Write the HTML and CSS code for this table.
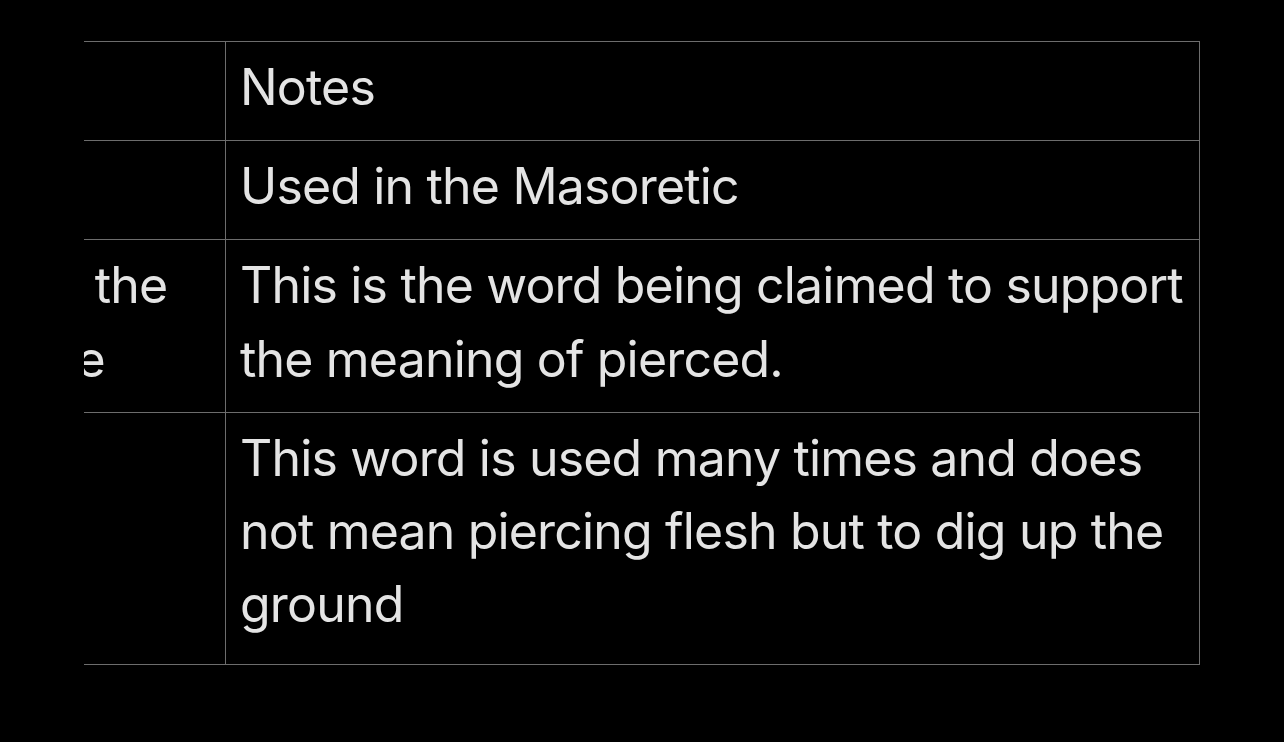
FILE: index.html
```html
<!DOCTYPE html>
<html lang="en">
<head>
<meta charset="utf-8">
<title>Notes table</title>
<link rel="stylesheet" href="styles.css">
</head>
<body>
<div class="scroller">
  <table class="notes">
    <colgroup>
      <col class="col-word">
      <col class="col-notes">
    </colgroup>
    <tr>
      <td>Word</td>
      <td>Notes</td>
    </tr>
    <tr>
      <td>Kaari</td>
      <td>Used in the Masoretic</td>
    </tr>
    <tr>
      <td>Kaaru, a reading in the<br>Psalms Scroll of the</td>
      <td>This is the word being claimed to support the meaning of pierced.</td>
    </tr>
    <tr class="last-row">
      <td>Karah</td>
      <td>This word is used many times and does not mean piercing flesh but to dig up the ground</td>
    </tr>
  </table>
</div>
</body>
</html>
```

FILE: styles.css
```css
html, body {
  margin: 0;
  padding: 0;
  background: #000;
}

body {
  padding-top: 41px;
  font-family: Inter, "Noto Sans", "Liberation Sans", sans-serif;
  color: #e4e4e4;
}

.scroller {
  margin-left: 84px;
  width: 1116px;
  overflow: hidden;
}

.notes {
  margin-left: -445px;
  width: 1561px;
  table-layout: fixed;
  border-collapse: collapse;
  font-size: 50px;
  line-height: 74px;
  letter-spacing: -0.82px;
}

.col-word {
  width: 586px;
}

.notes td {
  border: 1px solid #6d6d6d;
  padding: 8px 6px 16px 14px;
  vertical-align: top;
  text-align: left;
}

.notes .last-row td {
  padding-top: 9px;
  padding-bottom: 23px;
  line-height: 73px;
}
```
